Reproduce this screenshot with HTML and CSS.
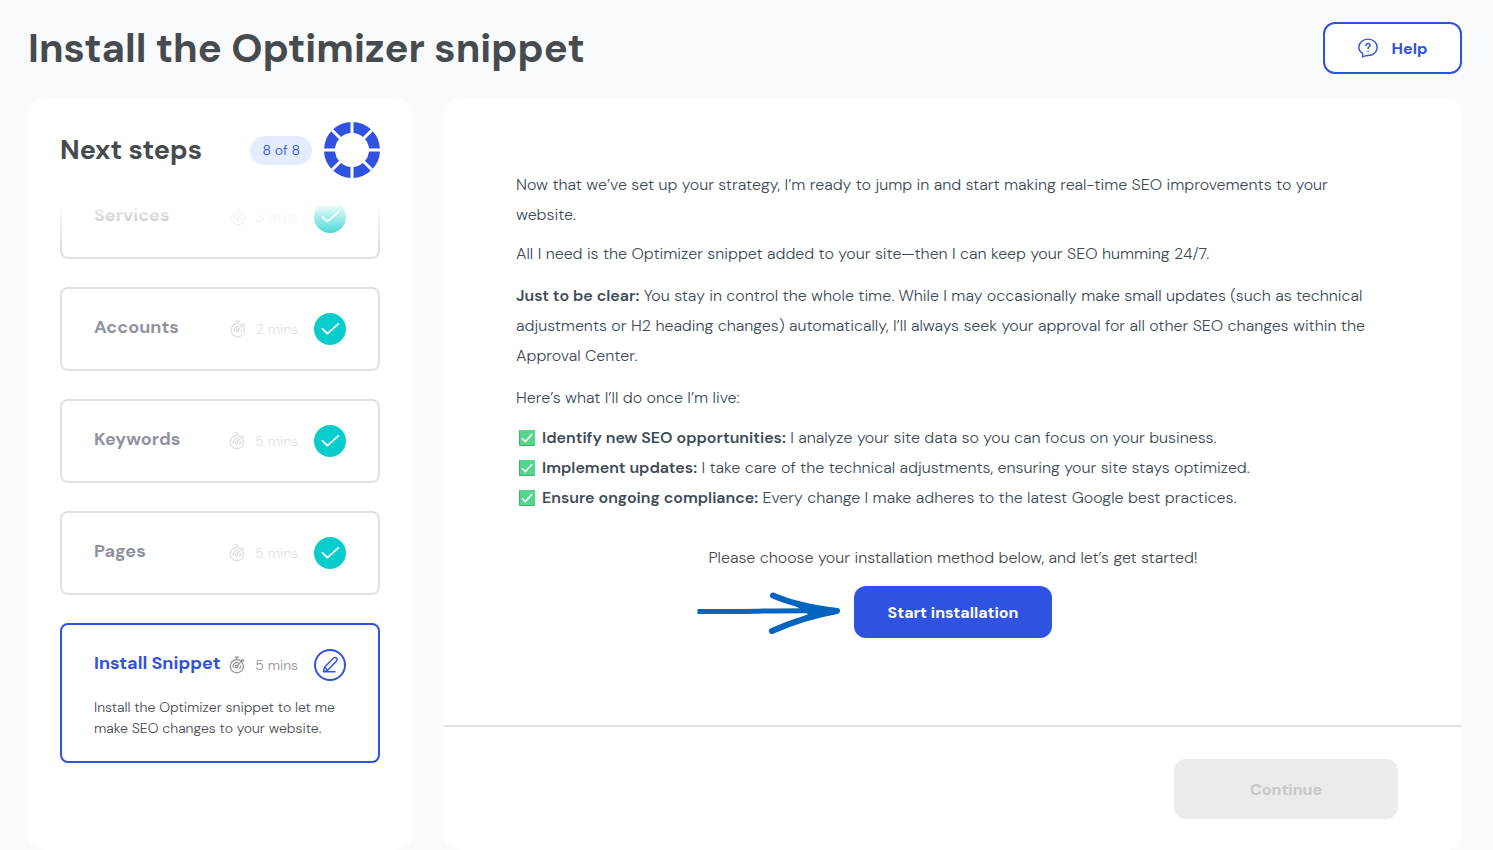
FILE: index.html
```html
<!DOCTYPE html>
<html lang="en">

<head>
    <meta charset="UTF-8">
    <meta name="viewport" content="width=device-width, initial-scale=1.0">
    <title>Install the Optimizer snippet</title>
    <link rel="stylesheet" href="styles.css">
</head>

<body>
    <svg class="sprite" aria-hidden="true">
        <symbol id="timer" viewBox="0 0 16 18">
            <g fill="none" stroke="currentColor" stroke-width="1.3" stroke-linecap="round" stroke-linejoin="round">
                <circle cx="7.800" cy="10.200" r="6.600"/>
                <path d="M6 1.200h3.600M7.800 1.400v2M13 3.400l1.800 1.600M12.300 5.200l1.400-1.200"/>
                <path d="M4.300 11.300a3.700 3.700 0 0 1 4.600-4.600M11.400 9.800a3.700 3.700 0 0 1-.5 2.400"/>
                <path d="M8.200 9.800L11.400 6.400"/>
                <circle cx="7.500" cy="10.600" r="1.200"/>
            </g>
        </symbol>
        <symbol id="tick" viewBox="0 0 32 32">
            <circle cx="16" cy="16" r="16" fill="#0acccd"/>
            <path d="M8.500 15.800l5 4.900L24.300 10.800" fill="none" stroke="#fff" stroke-width="1.800" stroke-linecap="round" stroke-linejoin="round"/>
        </symbol>
        <symbol id="check" viewBox="0 0 16 16">
            <rect width="16" height="16" rx="1" fill="#3fae74"/>
            <rect x="1" width="15" height="15" rx="1" fill="#55d68c"/>
            <path d="M3 8.200l3.400 3.400L13.200 4" fill="none" stroke="#fff" stroke-width="1.500"/>
        </symbol>
    </svg>

    <header class="header">
        <h1>Install the Optimizer snippet</h1>
        <button type="button" class="btn btn_help">
            <svg width="20" height="20" viewBox="0 0 20 20" fill="none" stroke="currentColor" stroke-width="1.4" stroke-linecap="round" stroke-linejoin="round" aria-hidden="true">
                <path d="M4.700 19v-3.600C2.200 13.900 .8 11.700 .8 9.300c0-4.700 4.100-8.200 9.200-8.200s9.200 3.500 9.200 8.200-4.100 8.200-9.200 8.200c-1.800 0-3.600 .4-5.300 1.500z"/>
                <path d="M8 7.400c0-1.200.9-1.900 2.100-1.900s2 .8 2 1.800c0 1.500-2.100 1.600-2.100 3.100M10 13.200v.2"/>
            </svg>
            Help
        </button>
    </header>

    <main class="layout">
        <aside class="sidebar">
            <div class="sidebar_top">
                <h2>Next steps</h2>
                <span class="count">8 of 8</span>
                <svg width="56" height="56" viewBox="0 0 56 56" fill="none" aria-hidden="true">
                    <circle cx="28" cy="28" r="22.500" stroke="#2f52e0" stroke-width="11"/>
                    <path d="M28 0v56M0 28h56M8.200 8.200l39.600 39.600M47.800 8.200L8.200 47.800" stroke="#fff" stroke-width="3"/>
                </svg>
            </div>
            <div class="steps_box">
                <ol class="steps">
                    <li class="step">
                        <div class="step_row">
                            <h3>Services</h3>
                            <svg class="timer" aria-hidden="true"><use href="#timer"/></svg>
                            <span class="mins">3 mins</span>
                            <svg class="state" aria-hidden="true"><use href="#tick"/></svg>
                        </div>
                    </li>
                    <li class="step">
                        <div class="step_row">
                            <h3>Accounts</h3>
                            <svg class="timer" aria-hidden="true"><use href="#timer"/></svg>
                            <span class="mins">2 mins</span>
                            <svg class="state" aria-hidden="true"><use href="#tick"/></svg>
                        </div>
                    </li>
                    <li class="step">
                        <div class="step_row">
                            <h3>Keywords</h3>
                            <svg class="timer" aria-hidden="true"><use href="#timer"/></svg>
                            <span class="mins">5 mins</span>
                            <svg class="state" aria-hidden="true"><use href="#tick"/></svg>
                        </div>
                    </li>
                    <li class="step">
                        <div class="step_row">
                            <h3>Pages</h3>
                            <svg class="timer" aria-hidden="true"><use href="#timer"/></svg>
                            <span class="mins">5 mins</span>
                            <svg class="state" aria-hidden="true"><use href="#tick"/></svg>
                        </div>
                    </li>
                    <li class="step active">
                        <div class="step_row">
                            <h3>Install Snippet</h3>
                            <svg class="timer" aria-hidden="true"><use href="#timer"/></svg>
                            <span class="mins">5 mins</span>
                            <svg class="state" viewBox="0 0 32 32" fill="none" stroke="#2f52e0" stroke-linecap="round" stroke-linejoin="round" aria-hidden="true">
                                <circle cx="16" cy="16" r="15" stroke-width="2"/>
                                <path d="M9.400 22.800l1.100-4.600L19.600 9.100a2.100 2.100 0 0 1 3 0a2.100 2.100 0 0 1 0 3L13.700 21.300zM10.500 18.200l3.200 3.100M9.400 22.800h11.600" stroke-width="1.400"/>
                            </svg>
                        </div>
                        <p>Install the Optimizer snippet to let me make SEO changes to your website.</p>
                    </li>
                </ol>
            </div>
        </aside>

        <section class="panel">
            <div class="content">
                <p>Now that we’ve set up your strategy, I’m ready to jump in and start making real-time SEO improvements to your website.</p>
                <p>All I need is the Optimizer snippet added to your site—then I can keep your SEO humming 24/7.</p>
                <p class="spaced"><b>Just to be clear:</b> You stay in control the whole time. While I may occasionally make small updates (such as technical adjustments or H2 heading changes) automatically, I’ll always seek your approval for all other SEO changes within the Approval Center.</p>
                <p class="spaced">Here’s what I’ll do once I’m live:</p>
                <ul class="todo">
                    <li><svg aria-hidden="true"><use href="#check"/></svg><span><b>Identify new SEO opportunities:</b> I analyze your site data so you can focus on your business.</span></li>
                    <li><svg aria-hidden="true"><use href="#check"/></svg><span><b>Implement updates:</b> I take care of the technical adjustments, ensuring your site stays optimized.</span></li>
                    <li><svg aria-hidden="true"><use href="#check"/></svg><span><b>Ensure ongoing compliance:</b> Every change I make adheres to the latest Google best practices.</span></li>
                </ul>
                <p class="choose">Please choose your installation method below, and let’s get started!</p>
                <div class="start">
                    <svg class="arrow" viewBox="0 0 146 44" aria-hidden="true">
                        <g fill="none" stroke="#0465c0" stroke-linecap="round" stroke-linejoin="round">
                            <path d="M4 20.500C45 21 90 19 138 20" stroke-width="5" stroke-linecap="square"/>
                            <path d="M77 4.500C94 12 116 17 141 20C118 24 94 32 76 40" stroke-width="6"/>
                        </g>
                        <path d="M98 14l20 2 22 1v6l-22 4-18 3 12-7z" fill="#0465c0"/>
                    </svg>
                    <button type="button" class="btn btn_start">Start installation</button>
                </div>
            </div>
            <footer class="footer">
                <button type="button" class="btn btn_next" disabled>Continue</button>
            </footer>
        </section>
    </main>
</body>

</html>
```

FILE: styles.css
```css
* {
    padding: 0;
    margin: 0;
    box-sizing: border-box;
}
body {
    display: flex;
    flex-direction: column;
    min-height: 100vh;
    padding: 22px 31px 0 28px;
    background-color: #f9fafc;
    color: #464b4f;
    font-family: "DM Sans", Inter, "Liberation Sans", sans-serif;
    font-size: 16px;
    font-weight: 300;
}
ol,
ul {
    list-style: none;
}
b {
    font-weight: 600;
}
.sprite {
    display: none;
}
.btn {
    border: 0;
    border-radius: 12px;
    font-family: inherit;
    font-size: 16px;
    font-weight: 700;
    cursor: pointer;
}
.header {
    display: flex;
    justify-content: space-between;
    align-items: center;
    margin-bottom: 24px;
}
.header h1 {
    font-size: 40px;
    font-weight: 700;
    line-height: 52px;
}
.btn_help {
    display: flex;
    justify-content: center;
    align-items: center;
    gap: 14px;
    width: 139px;
    height: 52px;
    border: 2px solid #2f52e0;
    background-color: #fff;
    color: #2f52e0;
}
.layout {
    display: flex;
    flex: 1;
    gap: 32px;
}
.sidebar {
    width: 384px;
    padding: 24px 32px;
    border-radius: 16px;
    background-color: #fff;
}
.sidebar_top {
    display: flex;
    align-items: center;
    gap: 12px;
    margin-bottom: 28px;
}
.sidebar_top h2 {
    flex: 1;
    font-size: 27px;
    font-weight: 700;
    line-height: 34px;
}
.count {
    padding: 0 12px;
    border-radius: 15px;
    background-color: #e4edff;
    color: #2f52e0;
    font-size: 14px;
    line-height: 29px;
}
/* list is scrolled down, the first step fades out under the heading */
.steps_box {
    position: relative;
    overflow: hidden;
}
.steps_box::before {
    content: "";
    position: absolute;
    top: 0;
    left: 0;
    right: 0;
    height: 38px;
    background: linear-gradient(rgba(255, 255, 255, .9), rgba(255, 255, 255, 0));
}
.steps {
    display: flex;
    flex-direction: column;
    gap: 28px;
    margin-top: -31px;
}
.step {
    padding: 24px 32px;
    border: 2px solid #dfe2e6;
    border-radius: 8px;
}
.step_row {
    display: flex;
    align-items: center;
}
.step h3 {
    flex: 1;
    padding-bottom: 4px;
    color: #90939e;
    font-size: 18px;
    font-weight: 700;
    white-space: nowrap;
}
.timer {
    width: 16px;
    height: 18px;
    margin-right: 10px;
    color: #dfe0e4;
}
.mins {
    margin-right: 16px;
    color: #dfe0e4;
    font-size: 14px;
}
.state {
    width: 32px;
    height: 32px;
}
.step.active {
    padding-bottom: 22px;
    border-color: #2f52e0;
}
.active h3 {
    color: #2f52e0;
}
.active .timer,
.active .mins {
    color: #929292;
}
.step p {
    margin-top: 16px;
    font-size: 14px;
    line-height: 21px;
}
.panel {
    display: flex;
    flex: 1;
    flex-direction: column;
    border-radius: 16px;
    background-color: #fff;
}
.content {
    flex: 1;
    padding: 72px;
    color: #3c4c57;
    line-height: 30px;
}
.content p {
    margin-bottom: 9px;
}
.content .spaced {
    margin-top: 12px;
}
.todo {
    margin-top: 10px;
}
.todo li {
    display: flex;
    align-items: center;
    gap: 7px;
    padding-left: 3px;
}
.todo svg {
    flex: none;
    width: 16px;
    height: 16px;
}
.content .choose {
    margin: 30px 0 13px;
    color: #464b4f;
    text-align: center;
}
.start {
    position: relative;
    width: 198px;
    margin: 0 auto;
}
.btn_start {
    display: block;
    width: 100%;
    height: 52px;
    background-color: #2f52e0;
    color: #fff;
}
.arrow {
    position: absolute;
    top: 5px;
    right: 210px;
    width: 146px;
    height: 44px;
}
.footer {
    display: flex;
    justify-content: flex-end;
    padding: 32px 64px 31px;
    border-top: 2px solid #dfe2e6;
}
.btn_next {
    width: 224px;
    height: 60px;
    background-color: #ebebeb;
    color: #c6c7cb;
    cursor: default;
}
```
